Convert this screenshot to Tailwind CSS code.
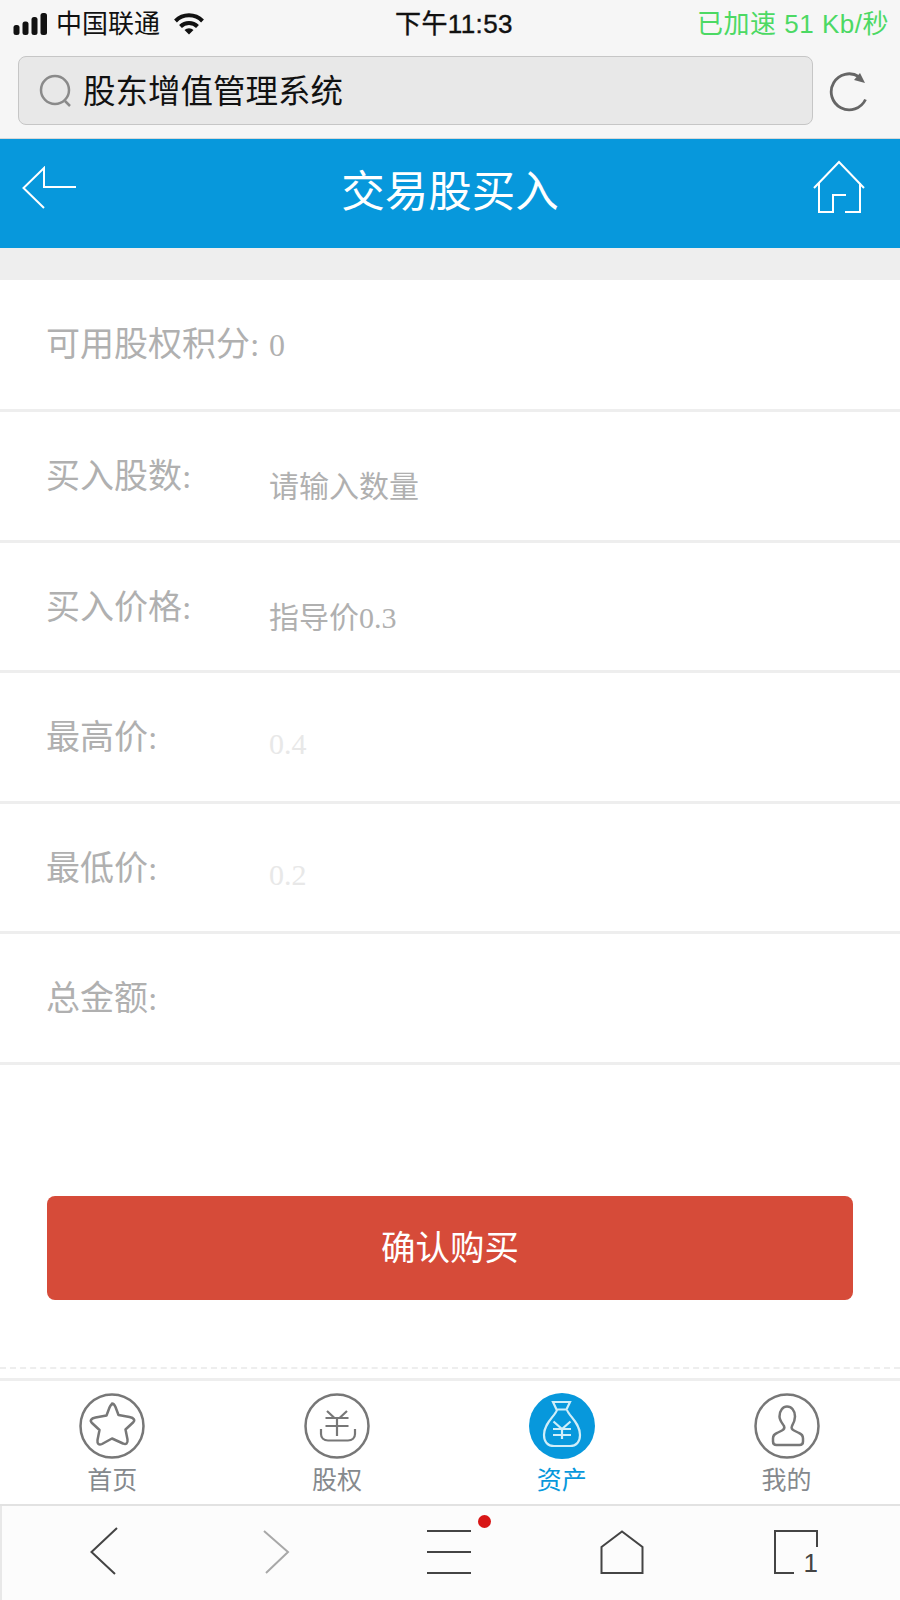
<!DOCTYPE html>
<html lang="zh-CN">

<head>
    <meta charset="UTF-8">
    <meta name="viewport" content="width=device-width, initial-scale=1.0">
    <title>交易股买入</title>
    <script src="https://cdn.jsdelivr.net/npm/@tailwindcss/browser@4"></script>
</head>

<body class="bg-white">
    <div class="w-[900px] h-[1600px] flex flex-col overflow-hidden font-['Liberation_Sans','Noto_Sans_CJK_SC',sans-serif]">

        <!-- Browser status + address bar -->
        <div class="h-[139px] bg-[#f6f6f6] border-b border-[#d8d8d8] flex flex-col shrink-0">
            <div class="h-[47px] flex items-center justify-between pl-[13px] pr-[11px] relative">
                <div class="flex items-center">
                    <svg width="36" height="24" viewBox="0 0 36 24" fill="#111">
                        <rect x="0.500" y="13" width="6" height="10" rx="2.500" />
                        <rect x="9.500" y="9.500" width="6" height="13.500" rx="2.500" />
                        <rect x="18.500" y="5" width="6" height="18" rx="2.500" />
                        <rect x="27.500" y="1" width="6.500" height="22" rx="2.500" />
                    </svg>
                    <span class="text-[26px] leading-none text-[#111] ml-[7px] w-[104px]">中国联通</span>
                    <svg class="ml-[14px]" width="30" height="22" viewBox="0 0 30 22" fill="none" stroke="#111" stroke-width="4">
                        <path d="M1.500 8A19 19 0 0 1 28.500 8" />
                        <path d="M6.500 13.500A12 12 0 0 1 23.500 13.500" />
                        <path d="M15 21.500L10.500 17A6.500 6.500 0 0 1 19.500 17z" fill="#111" stroke="none" />
                    </svg>
                </div>
                <span class="absolute left-[395px] text-[26px] leading-none text-[#111] tracking-[0.4px] [-webkit-text-stroke:0.4px_#111]">下午11:53</span>
                <span class="text-[26px] leading-none text-[#4cd964] tracking-[0.5px]">已加速 51 Kb/秒</span>
            </div>
            <div class="flex items-center pl-[18px] mt-[9px]">
                <div class="w-[795px] h-[69px] bg-[#e8e8e8] border border-[#c6c6c6] rounded-[8px] flex items-center pl-[20px]">
                    <svg width="34" height="36" viewBox="0 0 34 36" fill="none" stroke="#8a8a8a" stroke-width="2.500">
                        <circle cx="16" cy="17" r="14" />
                        <path d="M26 28l5 5" />
                    </svg>
                    <span class="text-[32.500px] leading-none text-[#111] ml-[10px] mt-[4px]">股东增值管理系统</span>
                </div>
                <svg class="ml-[15px]" width="42" height="42" viewBox="0 0 42 42" fill="none" stroke="#666" stroke-width="2.800">
                    <path d="M37.500 29.500A18 18 0 1 1 31 6.700" />
                    <path d="M37 13L32 3l-6 7z" fill="#666" stroke="none" />
                </svg>
            </div>
        </div>

        <!-- Page header -->
        <div class="h-[109px] bg-[#0798dc] flex items-start justify-between pl-[22px] pr-[34px] relative shrink-0">
            <svg class="mt-[27px]" width="56" height="46" viewBox="0 0 56 46" fill="none" stroke="#fff" stroke-width="2">
                <path d="M22 42L1.500 22 22 2v19h32" />
            </svg>
            <span class="absolute left-0 right-0 top-[27px] text-center text-[43.500px] leading-[52px] text-white">交易股买入</span>
            <svg class="mt-[21px]" width="54" height="54" viewBox="0 0 54 54" fill="none" stroke="#fff" stroke-width="2">
                <path d="M2 28L27 2l25 26" />
                <path d="M7 23v29h14V35h13M33 52h15V23" />
            </svg>
        </div>

        <div class="h-[32px] bg-[#eeeeee] shrink-0"></div>

        <!-- Form rows -->
        <div class="flex flex-col shrink-0 text-[#b0b0b0] font-['Liberation_Serif','Noto_Sans_CJK_SC',serif]">
            <div class="h-[132px] border-b-[3px] border-[#eeeeee] flex items-start pl-[46px] pt-[45px]">
                <span class="w-[223px] text-[34px] leading-[40px] whitespace-nowrap">可用股权积分:</span>
                <span class="text-[32px] leading-[40px]">0</span>
            </div>
            <div class="h-[131px] border-b-[3px] border-[#eeeeee] flex items-start pl-[46px] pt-[45px]">
                <span class="w-[223px] text-[34px] leading-[40px]">买入股数:</span>
                <span class="text-[30px] leading-[36px] mt-[12px]">请输入数量</span>
            </div>
            <div class="h-[130px] border-b-[3px] border-[#eeeeee] flex items-start pl-[46px] pt-[45px]">
                <span class="w-[223px] text-[34px] leading-[40px]">买入价格:</span>
                <span class="text-[30px] leading-[36px] mt-[12px]">指导价0.3</span>
            </div>
            <div class="h-[131px] border-b-[3px] border-[#eeeeee] flex items-start pl-[46px] pt-[45px]">
                <span class="w-[223px] text-[34px] leading-[40px]">最高价:</span>
                <span class="text-[30px] leading-[36px] mt-[8px] text-[#e8e8e8]">0.4</span>
            </div>
            <div class="h-[130px] border-b-[3px] border-[#eeeeee] flex items-start pl-[46px] pt-[45px]">
                <span class="w-[223px] text-[34px] leading-[40px]">最低价:</span>
                <span class="text-[30px] leading-[36px] mt-[8px] text-[#e8e8e8]">0.2</span>
            </div>
            <div class="h-[131px] border-b-[3px] border-[#eeeeee] flex items-start pl-[46px] pt-[45px]">
                <span class="w-[223px] text-[34px] leading-[40px]">总金额:</span>
            </div>
        </div>

        <!-- Submit -->
        <div class="px-[47px] pt-[131px] shrink-0">
            <div class="h-[104px] bg-[#d64b39] rounded-[8px] flex items-center justify-center text-white text-[34.500px] pt-[1px]">确认购买</div>
        </div>

        <div class="mt-[67px] border-t-2 border-dashed border-[#eeeeee] shrink-0"></div>

        <!-- Tab bar -->
        <div class="mt-[9px] h-[128px] border-t-[3px] border-b-[2px] border-t-[#eeeeee] border-b-[#e2e2e2] grid grid-cols-4 pr-[1px] shrink-0">
            <div class="flex flex-col items-center pt-[12px] text-[#85898d]">
                <svg width="66" height="66" viewBox="0 0 66 66" fill="none" stroke="#777" stroke-width="2.500">
                    <circle cx="33" cy="33" r="31.500" />
                    <path d="M33 10.500c1.500 0 2.500 1 3.500 3.500l3 8 11 2c4.500 1 6 3 3.500 5.500l-7.500 7 2 10c.5 4-1.500 5.500-4.500 4L33 45.500 23 51c-3 1.500-5 0-4.500-4l2-10-7.500-7c-2.500-2.500-1-4.500 3.500-5.500l11-2 3-8c1-2.500 2-3.500 3.500-3.500z" stroke-linejoin="round" />
                </svg>
                <span class="text-[25px] leading-[30px] mt-[6px]">首页</span>
            </div>
            <div class="flex flex-col items-center pt-[12px] text-[#85898d]">
                <svg width="66" height="66" viewBox="0 0 66 66" fill="none" stroke="#777" stroke-width="2.500">
                    <circle cx="33" cy="33" r="31.500" />
                    <path d="M23 18l7.500 7M43 18l-7.500 7M21.500 25h23M21.500 33h23M33 25v18" stroke-width="2.200" />
                    <path d="M17 36v5c0 4 3 6.500 7 6.500h20c4 0 7-2.500 7-6.500v-5" stroke-width="2.200" />
                </svg>
                <span class="text-[25px] leading-[30px] mt-[6px]">股权</span>
            </div>
            <div class="flex flex-col items-center pt-[12px] text-[#0798dc]">
                <svg width="66" height="66" viewBox="0 0 66 66" fill="none" stroke="#d0eef9" stroke-width="2.200">
                    <circle cx="33" cy="33" r="33" fill="#0798dc" stroke="none" />
                    <path d="M24 9h17l-3.500 7.500h-10z" />
                    <path d="M28 17c-2 6-13 13-13 25 0 7 4 11 10 11h16c6 0 10-4 10-11 0-12-11-19-13-25" />
                    <path d="M24.500 28.500l8.500 7.500 8.500-7.500M24 36h18M24 42h18M33 36v10" />
                </svg>
                <span class="text-[25px] leading-[30px] mt-[6px]">资产</span>
            </div>
            <div class="flex flex-col items-center pt-[12px] text-[#85898d]">
                <svg width="66" height="66" viewBox="0 0 66 66" fill="none" stroke="#777" stroke-width="2.500">
                    <circle cx="33" cy="33" r="31.500" />
                    <path d="M33 13.500c4.500 0 8 4 8 10 0 4-1.500 7-3 9.500-1 2 0 3.500 2 4.500l5 2.500c2.500 1 4 3 4 5.500v3c0 2.500-1.500 3.500-3.500 3.500H22.500c-2 0-3.500-1-3.500-3.500v-3c0-2.500 1.500-4.500 4-5.500l5-2.500c2-1 3-2.500 2-4.500-1.500-2.500-4.500-5.500-4.500-9.500 0-6 3.500-10 7.500-10z" stroke-linejoin="round" />
                </svg>
                <span class="text-[25px] leading-[30px] mt-[6px]">我的</span>
            </div>
        </div>

        <!-- Browser toolbar -->
        <div class="flex-1 bg-[#fcfcfc] border-l-2 border-[#e8e8e8] flex items-start pl-[88px]">
            <svg class="mt-[21px]" width="28" height="48" viewBox="0 0 28 48" fill="none" stroke="#444" stroke-width="2">
                <path d="M27 1L1.500 25 25 47" />
            </svg>
            <svg class="mt-[24px] ml-[144px]" width="28" height="44" viewBox="0 0 28 44" fill="none" stroke="#a8a8a8" stroke-width="2">
                <path d="M2 1l24 21L4 43" />
            </svg>
            <div class="relative w-[44px] h-[44px] mt-[24px] ml-[137px] flex flex-col justify-between">
                <div class="h-[2px] bg-[#444]"></div>
                <div class="h-[2px] bg-[#444]"></div>
                <div class="h-[2px] bg-[#444]"></div>
                <div class="absolute left-[51px] top-[-15px] w-[13px] h-[13px] rounded-full bg-[#d81616]"></div>
            </div>
            <svg class="mt-[24px] ml-[129px]" width="44" height="44" viewBox="0 0 44 44" fill="none" stroke="#444" stroke-width="2">
                <path d="M1.500 17L22 1.500 42.500 17v26h-41z" />
            </svg>
            <div class="relative w-[46px] h-[44px] mt-[24px] ml-[129px]">
                <svg width="46" height="44" viewBox="0 0 46 44" fill="none" stroke="#444" stroke-width="2">
                    <path d="M21 43H2V1h42v16" />
                </svg>
                <span class="absolute right-[1px] bottom-[-2px] text-[26px] leading-none text-[#444]">1</span>
            </div>
        </div>
    </div>
</body>

</html>
